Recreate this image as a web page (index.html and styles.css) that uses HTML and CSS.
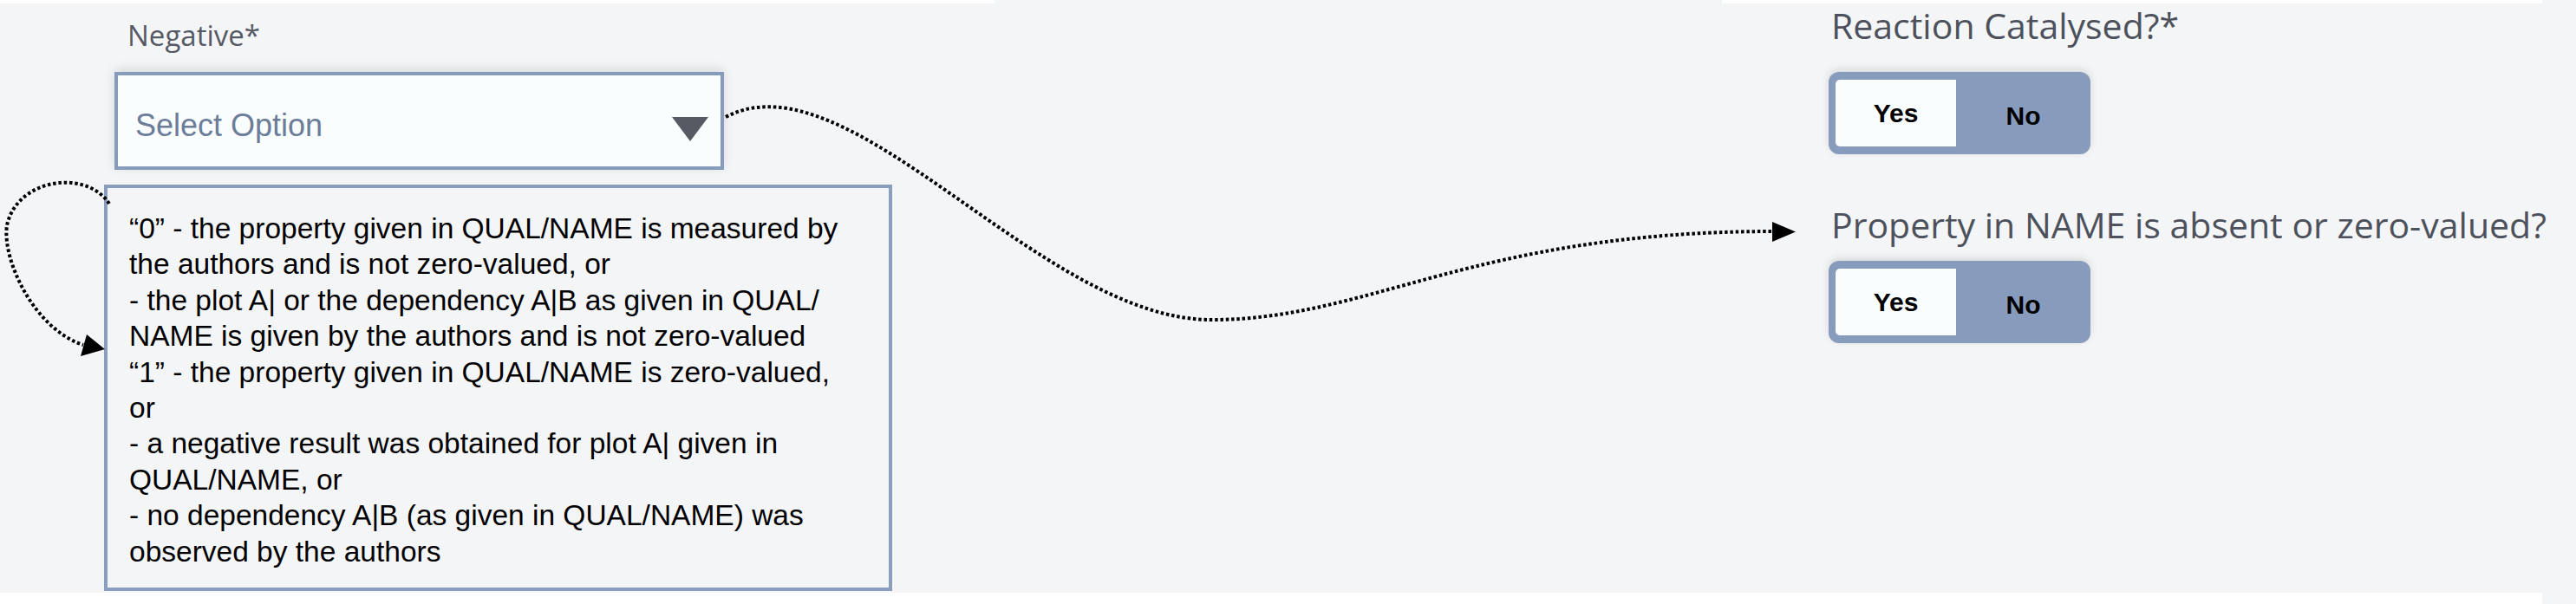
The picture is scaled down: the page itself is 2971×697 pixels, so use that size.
FILE: index.html
```html
<!DOCTYPE html>
<html lang="en">
<head>
    <meta charset="UTF-8">
    <title>Negative field</title>
    <link rel="stylesheet" href="styles.css">
</head>
<body>
    <div class="page">
        <div class="edge-top">
            <span class="edge-a"></span>
            <span class="edge-b"></span>
        </div>

        <div class="main">
            <section class="left">
                <label class="field-label">Negative*</label>
                <div class="select">
                    <span class="select-text">Select Option</span>
                    <svg class="caret" width="42" height="28" viewBox="0 0 42 28">
                        <polygon points="0,0 42,0 21,28" fill="#555a63"/>
                    </svg>
                </div>
                <div class="help">
                    “0” - the property given in QUAL/NAME is measured by<br>
                    the authors and is not zero-valued, or<br>
                    - the plot A| or the dependency A|B as given in QUAL/<br>
                    NAME is given by the authors and is not zero-valued<br>
                    “1” - the property given in QUAL/NAME is zero-valued,<br>
                    or<br>
                    - a negative result was obtained for plot A| given in<br>
                    QUAL/NAME, or<br>
                    - no dependency A|B (as given in QUAL/NAME) was<br>
                    observed by the authors
                </div>
            </section>

            <section class="right">
                <div class="question q-first">
                    <div class="q-label">Reaction Catalysed?*</div>
                    <div class="toggle">
                        <span class="opt yes">Yes</span>
                        <span class="opt no">No</span>
                    </div>
                </div>
                <div class="question q-second">
                    <div class="q-label">Property in NAME is absent or zero-valued?</div>
                    <div class="toggle">
                        <span class="opt yes">Yes</span>
                        <span class="opt no">No</span>
                    </div>
                </div>
            </section>
        </div>

        <div class="edge-bottom"></div>

        <!-- dotted arrows linking the fields -->
        <svg class="links" width="2971" height="697" viewBox="0 0 2971 697">
            <path d="M 837 135 C 980 60, 1200 369, 1397 369 C 1580 369, 1700 267, 2046 267"
                  fill="none" stroke="#000" stroke-width="4" stroke-dasharray="3.5 2.8"/>
            <polygon points="2044,256 2071,267.5 2044,279" fill="#000"/>
            <path d="M 126 235 C 100 195, 20 205, 8 260 C 2 300, 40 380, 96 398"
                  fill="none" stroke="#000" stroke-width="4" stroke-dasharray="3.5 2.8"/>
            <polygon points="100,386 121,403 93,411" fill="#000"/>
        </svg>
    </div>
</body>
</html>
```

FILE: styles.css
```css
body {
    margin: 0;
    background-color: #f4f5f7;
    font-family: "Open Sans", "Liberation Sans", sans-serif;
}
.page {
    position: relative;
    width: 2971px;
    height: 697px;
    overflow: hidden;
}
.edge-top {
    display: flex;
    height: 4px;
}
.edge-a {
    width: 1147px;
    background-color: #fff;
}
.edge-b {
    width: 946px;
    margin-left: 839px;
    background-color: #fff;
}
.edge-bottom {
    width: 2932px;
    height: 13px;
    background-color: #fff;
}
.main {
    display: flex;
    height: 680px;
}
.left {
    display: flex;
    flex-direction: column;
    align-items: flex-start;
    width: 909px;
    margin-left: 120px;
}
.field-label {
    display: block;
    margin: 17px 0 0 27px;
    font-size: 33px;
    line-height: 40px;
    color: #555a64;
}
.select {
    box-sizing: border-box;
    display: flex;
    align-items: center;
    justify-content: space-between;
    width: 703px;
    height: 113px;
    margin: 22px 0 0 12px;
    padding: 10px 14px 0 20px;
    background-color: #f9fdfe;
    border: 4px solid #879cbc;
    box-shadow: 0 -3px 12px rgba(0, 0, 0, 0.12);
}
.select-text {
    font-family: "Liberation Sans", Arial, sans-serif;
    font-size: 36px;
    line-height: 36px;
    color: #6c7d9a;
}
.caret {
    margin-top: 9px;
}
.help {
    box-sizing: border-box;
    width: 909px;
    height: 469px;
    margin-top: 17px;
    padding: 26px 20px 0 25px;
    border: 4px solid #8a9fbe;
    font-family: "Liberation Sans", Arial, sans-serif;
    font-size: 33.5px;
    line-height: 41.4px;
    color: #000;
    white-space: nowrap;
}
.right {
    display: flex;
    flex-direction: column;
    margin-left: 1080px;
}
.q-label {
    margin-left: 3px;
    font-size: 41px;
    line-height: 48px;
    color: #4c515b;
    white-space: nowrap;
}
.q-first {
    padding-top: 1px;
}
.q-first .toggle {
    margin-top: 30px;
}
.q-second {
    margin-top: 57px;
}
.q-second .toggle {
    margin-top: 18px;
}
.toggle {
    display: flex;
    width: 302px;
    height: 95px;
    background-color: #879cbc;
    border-radius: 12px;
    box-shadow: 0 -3px 10px rgba(0, 0, 0, 0.12);
}
.opt {
    display: flex;
    align-items: center;
    justify-content: center;
    font-family: "Liberation Sans", Arial, sans-serif;
    font-weight: bold;
    font-size: 30px;
    color: #000;
}
.yes {
    width: 139px;
    margin: 9px 0 9px 8px;
    background-color: #f9fdfe;
    border-radius: 5px 0 0 5px;
}
.no {
    flex: 1;
    padding-top: 7px;
}
.links {
    position: absolute;
    top: 0;
    left: 0;
    pointer-events: none;
}
```
